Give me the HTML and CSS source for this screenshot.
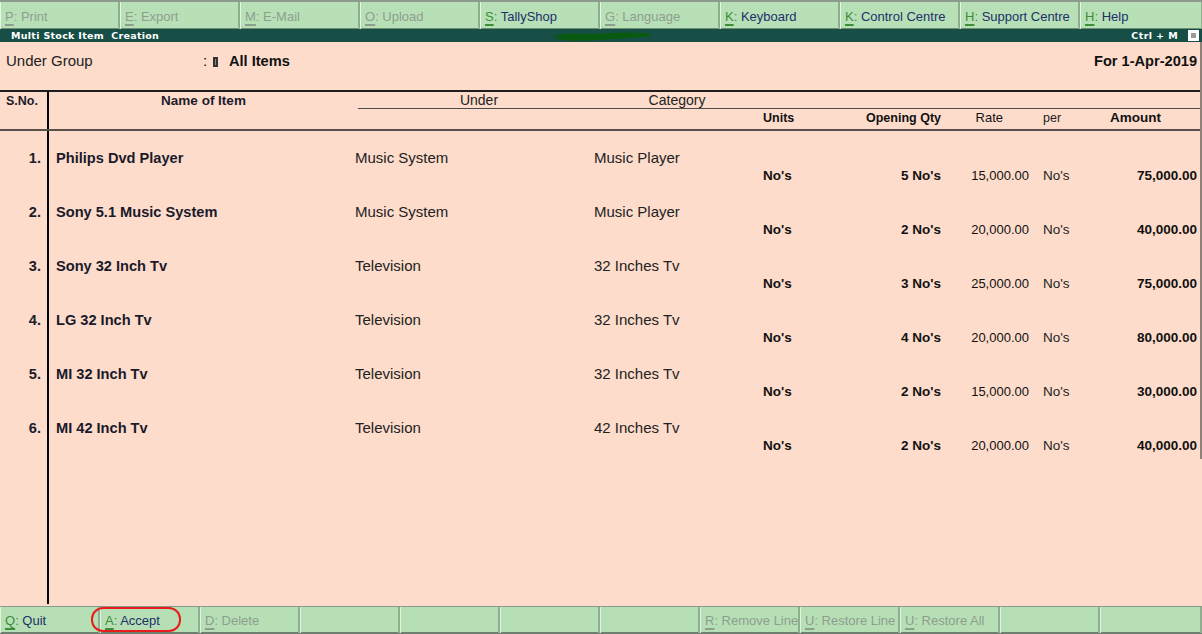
FILE: index.html
```html
<!DOCTYPE html>
<html>
<head>
<meta charset="utf-8">
<link rel="stylesheet" href="styles.css">
</head>
<body>
<div class="app">
  <div class="topbar">
    <div class="btn off"><span class="key">P</span>: Print</div>
    <div class="btn off"><span class="key">E</span>: Export</div>
    <div class="btn off"><span class="key">M</span>: E-Mail</div>
    <div class="btn off"><span class="key">O</span>: Upload</div>
    <div class="btn"><span class="key">S</span><span class="colon">:</span> TallyShop</div>
    <div class="btn off"><span class="key">G</span>: Language</div>
    <div class="btn"><span class="key">K</span><span class="colon">:</span> Keyboard</div>
    <div class="btn"><span class="key">K</span><span class="colon">:</span> Control Centre</div>
    <div class="btn"><span class="key">H</span><span class="colon">:</span> Support Centre</div>
    <div class="btn last"><span class="key">H</span><span class="colon">:</span> Help</div>
  </div>
  <div class="titlebar">
    <span class="title">Multi Stock Item&nbsp; Creation</span>
    <svg class="smudge" width="98" height="12" viewBox="0 0 98 12"><path d="M1 6 C8 3 20 3 35 4 C50 4 62 2 72 3 L74 0.5 L77 3 C84 3 90 3 96 3.5 L96 6.5 C85 7 75 8 60 9 C45 10 30 11 15 10.5 C8 10 3 9 1 8 Z" fill="#075a0f"/></svg>
    <span class="ctrl">Ctrl + M</span>
    <span class="winbox"><span></span></span>
  </div>
  <div class="main">
    <div class="upper">
      <div class="group-row">
        <span class="g-label">Under Group</span>
        <span class="g-colon">:</span>
        <span class="g-cursor"></span>
        <span class="g-value">All Items</span>
        <span class="g-date">For 1-Apr-2019</span>
      </div>
      <div class="thead">
        <div class="hrow1">
          <div class="sno h-sno">S.No.</div>
          <div class="h-name">Name of Item</div>
          <div class="h-rest">
            <span class="h-under">Under</span>
            <span class="h-cat">Category</span>
          </div>
        </div>
        <div class="hrow2">
          <div class="sno"></div>
          <div class="line2">
            <span class="c-units">Units</span>
            <span class="c-qty">Opening Qty</span>
            <span class="c-rate h-rate">Rate</span>
            <span class="c-per">per</span>
            <span class="c-amt h-amt">Amount</span>
          </div>
        </div>
      </div>

      <div class="item">
        <div class="sno">1.</div>
        <div class="cells">
          <div class="line1"><span class="c-name">Philips Dvd Player</span><span class="c-under">Music System</span><span class="c-cat">Music Player</span></div>
          <div class="line2"><span class="c-units">No's</span><span class="c-qty">5 No's</span><span class="c-rate">15,000.00</span><span class="c-per">No's</span><span class="c-amt">75,000.00</span></div>
        </div>
      </div>
      <div class="item">
        <div class="sno">2.</div>
        <div class="cells">
          <div class="line1"><span class="c-name">Sony 5.1 Music System</span><span class="c-under">Music System</span><span class="c-cat">Music Player</span></div>
          <div class="line2"><span class="c-units">No's</span><span class="c-qty">2 No's</span><span class="c-rate">20,000.00</span><span class="c-per">No's</span><span class="c-amt">40,000.00</span></div>
        </div>
      </div>
      <div class="item">
        <div class="sno">3.</div>
        <div class="cells">
          <div class="line1"><span class="c-name">Sony 32 Inch Tv</span><span class="c-under">Television</span><span class="c-cat">32 Inches Tv</span></div>
          <div class="line2"><span class="c-units">No's</span><span class="c-qty">3 No's</span><span class="c-rate">25,000.00</span><span class="c-per">No's</span><span class="c-amt">75,000.00</span></div>
        </div>
      </div>
      <div class="item">
        <div class="sno">4.</div>
        <div class="cells">
          <div class="line1"><span class="c-name">LG 32 Inch Tv</span><span class="c-under">Television</span><span class="c-cat">32 Inches Tv</span></div>
          <div class="line2"><span class="c-units">No's</span><span class="c-qty">4 No's</span><span class="c-rate">20,000.00</span><span class="c-per">No's</span><span class="c-amt">80,000.00</span></div>
        </div>
      </div>
      <div class="item">
        <div class="sno">5.</div>
        <div class="cells">
          <div class="line1"><span class="c-name">MI 32 Inch Tv</span><span class="c-under">Television</span><span class="c-cat">32 Inches Tv</span></div>
          <div class="line2"><span class="c-units">No's</span><span class="c-qty">2 No's</span><span class="c-rate">15,000.00</span><span class="c-per">No's</span><span class="c-amt">30,000.00</span></div>
        </div>
      </div>
      <div class="item last-item">
        <div class="sno">6.</div>
        <div class="cells">
          <div class="line1"><span class="c-name">MI 42 Inch Tv</span><span class="c-under">Television</span><span class="c-cat">42 Inches Tv</span></div>
          <div class="line2"><span class="c-units">No's</span><span class="c-qty">2 No's</span><span class="c-rate">20,000.00</span><span class="c-per">No's</span><span class="c-amt">40,000.00</span></div>
        </div>
      </div>
    </div>
    <div class="filler"><div class="sno"></div></div>
  </div>
  <div class="bottombar">
    <div class="bbtn"><span class="key">Q</span><span class="colon">:</span> Quit</div>
    <div class="bbtn"><span class="key">A</span><span class="colon">:</span> Accept</div>
    <div class="bbtn off"><span class="key">D</span>: Delete</div>
    <div class="bbtn"></div>
    <div class="bbtn"></div>
    <div class="bbtn"></div>
    <div class="bbtn"></div>
    <div class="bbtn off"><span class="key">R</span>: Remove Line</div>
    <div class="bbtn off"><span class="key">U</span>: Restore Line</div>
    <div class="bbtn off"><span class="key">U</span>: Restore All</div>
    <div class="bbtn"></div>
    <div class="bbtn last"></div>
    <span class="mark"></span>
  </div>
</div>
</body>
</html>
```

FILE: styles.css
```css
* { box-sizing: border-box; }
html, body { margin: 0; padding: 0; }
body {
  font-family: "Liberation Sans", Arial, sans-serif;
  background: #fddccb;
  color: #111;
}
.app {
  width: 1202px;
  height: 634px;
  display: flex;
  flex-direction: column;
  overflow: hidden;
}

/* top button bar */
.topbar {
  height: 29px;
  display: grid;
  grid-template-columns: repeat(9, 120px) 122px;
  background: #b8e0b7;
  border-top: 2px solid #8d9a8d;
  border-bottom: 1px solid #6f8a70;
}
.btn {
  font-size: 13px;
  line-height: 25px;
  padding-top: 2px;
  padding-left: 4px;
  color: #20306a;
  border-left: 1px solid #e6f5e5;
  border-right: 2px solid #8fae8f;
  white-space: nowrap;
}
.btn.last { border-right: 1px solid #8fae8f; }
.key {
  color: #3c8d3c;
  text-decoration: underline;
  text-decoration-thickness: 2px;
  text-underline-offset: 3px;
}
.colon { color: #3c8d3c; }
.off { color: #8e9e8e; }
.off .key { color: #8e9e8e; }

/* title bar */
.titlebar {
  height: 13px;
  background: #174f47;
  display: flex;
  align-items: center;
  position: relative;
  color: #fff;
  font-family: "DejaVu Sans", Verdana, sans-serif;
  font-weight: bold;
  font-size: 9.5px;
}
.title { padding-left: 11px; letter-spacing: 0.3px; }
.smudge { position: absolute; left: 554px; top: 1px; }
.ctrl { margin-left: auto; margin-right: 10px; letter-spacing: 0.4px; }
.winbox {
  width: 11px;
  height: 11px;
  background: #fff;
  margin-right: 3px;
  display: flex;
  align-items: center;
  justify-content: center;
}
.winbox span { width: 5px; height: 5px; background: #9a9a9a; }

/* main */
.main {
  height: 564px;
  display: flex;
  flex-direction: column;
}
.upper {
  border-right: 2px solid #8f8078;
}
.group-row {
  height: 48px;
  padding-top: 10px;
  display: flex;
  align-items: flex-start;
  font-size: 15px;
  line-height: 18px;
}
.g-label { padding-left: 6px; width: 203px; color: #222; }
.g-colon { width: 10px; }
.g-cursor {
  width: 5px;
  height: 10px;
  border: 2px solid #333;
  background: #888;
  margin-top: 5px;
  margin-right: 11px;
}
.g-value { font-weight: bold; font-size: 14.6px; }
.g-date { margin-left: auto; margin-right: 3px; font-weight: bold; font-size: 14.6px; }

.thead {
  border-top: 2px solid #1e1e1e;
  border-bottom: 2px solid #5a4f4b;
}
.hrow1 {
  display: grid;
  grid-template-columns: 49px 309px 1fr;
  height: 17px;
}
.sno {
  border-right: 2px solid #000;
  text-align: right;
  padding-right: 6px;
}
.h-sno {
  text-align: left;
  padding-left: 6px;
  padding-top: 1px;
  font-weight: bold;
  font-size: 12.5px;
  line-height: 16px;
  color: #1c1c2c;
}
.h-name {
  text-align: center;
  padding-top: 1px;
  font-weight: bold;
  font-size: 13.5px;
  line-height: 16px;
  color: #1c1c2c;
}
.h-rest {
  border-bottom: 1px solid #4a4a4a;
  display: flex;
  font-size: 14px;
  line-height: 16px;
  color: #222;
}
.h-under { width: 242px; text-align: center; }
.h-cat { width: 154px; text-align: center; }

.hrow2 {
  display: grid;
  grid-template-columns: 49px 1fr;
  height: 20px;
}
.hrow2 .line2 { font-size: 12.5px; line-height: 16px; font-weight: bold; padding-top: 1px; }
.hrow2 .h-rate { font-weight: normal; padding-right: 26px; }
.hrow2 .c-per { font-weight: normal; }
.hrow2 .h-amt { text-align: left; padding-left: 10px; font-size: 13.5px; }

/* items */
.item {
  display: grid;
  grid-template-columns: 49px 1fr;
  height: 54px;
}
.item.last-item { height: 58px; }
.item .sno {
  padding-top: 18px;
  font-weight: bold;
  font-size: 14.6px;
  line-height: 18px;
  color: #1c1c2c;
}
.cells { padding-top: 18px; }
.line1 {
  display: flex;
  font-size: 15px;
  line-height: 18px;
  color: #222;
}
.c-name {
  width: 306px;
  padding-left: 7px;
  font-weight: bold;
  font-size: 14.6px;
  color: #1a1a2a;
}
.c-under { width: 239px; }
.line2 {
  display: grid;
  grid-template-columns: 714px 100px 78px 88px 14px 57px 97px;
  font-size: 13.5px;
  line-height: 18px;
}
.line2::before { content: ""; }
.c-units { font-weight: bold; }
.c-qty { font-weight: bold; text-align: right; }
.c-rate { text-align: right; font-size: 13px; }
.c-per { grid-column: 6; color: #222; }
.c-amt { font-weight: bold; text-align: right; }

.filler {
  flex: 1;
  display: grid;
  grid-template-columns: 49px 1fr;
}
.filler .sno { margin-bottom: 2px; }

/* bottom bar */
.bottombar {
  height: 28px;
  display: grid;
  grid-template-columns: repeat(11, 100px) 102px;
  background: #b6dfb5;
  border-top: 1px solid #8a9a8a;
  border-bottom: 2px solid #6d7f6d;
  position: relative;
}
.bbtn {
  font-size: 13px;
  line-height: 24px;
  padding-top: 2px;
  padding-left: 4px;
  color: #20306a;
  border-left: 1px solid #e2f3e1;
  border-right: 2px solid #8fae8f;
  white-space: nowrap;
}
.bbtn.off { color: #8e9e8e; }
.mark {
  position: absolute;
  left: 91px;
  top: 0px;
  width: 90px;
  height: 25px;
  border: 2px solid #e81c1c;
  border-radius: 12px;
}
```
